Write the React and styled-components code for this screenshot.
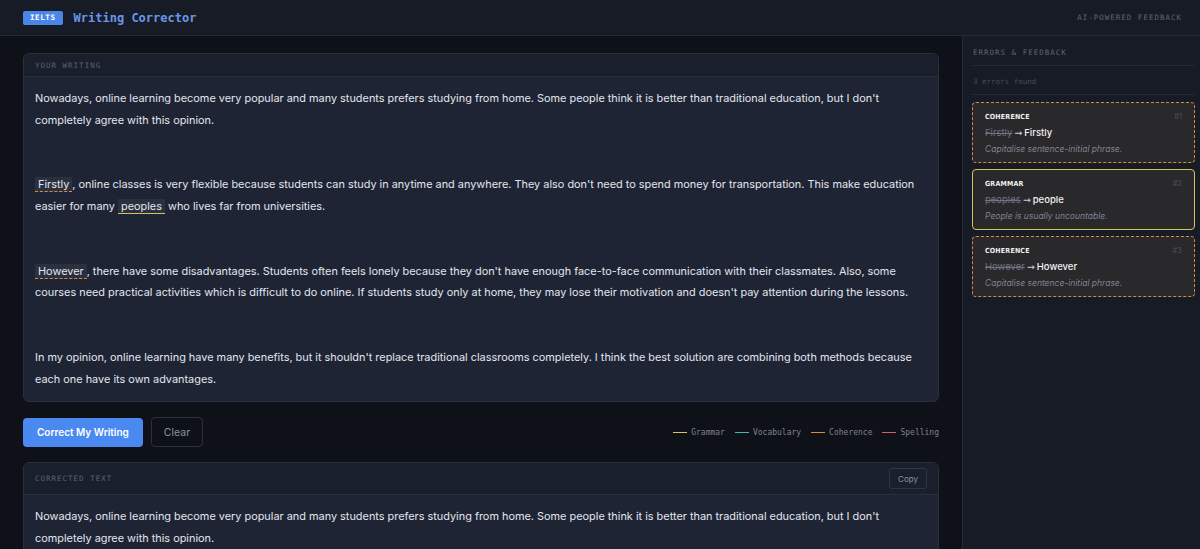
import React from 'react';
import styled, { createGlobalStyle } from 'styled-components';

const GlobalStyle = createGlobalStyle`
  html, body { margin: 0; padding: 0; background: #0e1117; }
  body { font-family: Inter, "Noto Sans", sans-serif; color: #e2e6ee; overflow: hidden; }
  * { box-sizing: border-box; }
`;

const mono = `"DejaVu Sans Mono", "Liberation Mono", monospace`;

const colors = {
  grammar: '#d8c25a',
  vocabulary: '#3fb8b0',
  coherence: '#d98a3d',
  spelling: '#e0566a',
};

const Page = styled.div`
  width: 1200px;
  height: 549px;
  display: flex;
  flex-direction: column;
  overflow: hidden;
`;

const Header = styled.header`
  height: 36px;
  flex-shrink: 0;
  background: #161b26;
  border-bottom: 1px solid #232a38;
  display: flex;
  align-items: center;
  padding: 0 18px 0 23px;
  gap: 11px;
`;

const Badge = styled.span`
  background: #4a86e8;
  color: #fff;
  font-family: ${mono};
  font-size: 7.5px;
  font-weight: bold;
  letter-spacing: 0.6px;
  padding: 2px 7px;
  border-radius: 2px;
  line-height: 10px;
`;

const Title = styled.h1`
  margin: 0;
  font-family: ${mono};
  font-size: 12px;
  font-weight: bold;
  color: #6b96e6;
  flex: 1;
`;

const Tagline = styled.span`
  font-family: ${mono};
  font-size: 7.5px;
  letter-spacing: 1px;
  color: #5e6676;
`;

const Body = styled.div`
  flex: 1;
  display: flex;
  min-height: 0;
`;

const Main = styled.main`
  flex: 1;
  padding: 17px 23px 0 23px;
  display: flex;
  flex-direction: column;
  gap: 15px;
  overflow: hidden;
`;

const Card = styled.section`
  background: #1e2433;
  border: 1px solid #283040;
  border-radius: 6px;
  flex-shrink: 0;
  overflow: hidden;
`;

const CardHead = styled.div`
  height: ${p => p.$tall ? 32 : 23}px;
  background: #1a1f2c;
  border-bottom: 1px solid #283040;
  display: flex;
  align-items: center;
  justify-content: space-between;
  padding: 0 11px;
`;

const CardLabel = styled.span`
  font-family: ${mono};
  font-size: 7.5px;
  letter-spacing: 1px;
  color: #5a6272;
`;

const Text = styled.div`
  padding: 11px 11px 11px 11px;
  font-size: 10.9px;
  line-height: 21.6px;
  color: #e2e6ee;
`;

const Para = styled.p`
  margin: 0 0 43.2px;
  &:last-child { margin-bottom: 0; }
`;

const Mark = styled.span`
  background: rgba(255, 255, 255, 0.06);
  padding: 0 3px;
  border-bottom: 1.5px ${p => p.$dashed ? 'dashed' : 'solid'} ${p => p.$color};
`;

const Actions = styled.div`
  display: flex;
  align-items: center;
  gap: 8px;
`;

const PrimaryButton = styled.button`
  height: 29px;
  padding: 0 14px;
  background: #4a8af0;
  color: #fff;
  border: 0;
  border-radius: 4px;
  font-family: Inter, sans-serif;
  font-size: 10px;
  font-weight: 600;
`;

const GhostButton = styled.button`
  height: 30px;
  padding: 0 12px;
  background: transparent;
  color: #8a92a2;
  border: 1px solid #2a3140;
  border-radius: 4px;
  font-family: Inter, sans-serif;
  font-size: 10.5px;
`;

const Legend = styled.div`
  margin-left: auto;
  display: flex;
  gap: 10px;
`;

const LegendItem = styled.span`
  display: flex;
  align-items: center;
  gap: 4px;
  font-family: ${mono};
  font-size: 8px;
  color: #7c8494;
  &::before {
    content: '';
    width: 14px;
    height: 1.5px;
    background: ${p => p.$color};
  }
`;

const CopyButton = styled.button`
  height: 21px;
  padding: 0 8px;
  background: transparent;
  border: 1px solid #2e3646;
  border-radius: 3px;
  color: #8a92a2;
  font-family: Inter, sans-serif;
  font-size: 8px;
`;

const Sidebar = styled.aside`
  width: 238px;
  flex-shrink: 0;
  background: #161b26;
  border-left: 1px solid #232a38;
  padding: 10px 5px 0 9px;
  display: flex;
  flex-direction: column;
`;

const SideTitle = styled.div`
  font-family: ${mono};
  font-size: 7.5px;
  letter-spacing: 1px;
  color: #5e6676;
  padding: 2px 0 8px 1px;
  border-bottom: 1px solid #232a38;
`;

const Count = styled.div`
  font-family: ${mono};
  font-size: 7.5px;
  color: #444c5c;
  padding: 11px 0 8px 1px;
  border-bottom: 1px solid #232a38;
  margin-bottom: 7px;
`;

const ErrorList = styled.div`
  display: flex;
  flex-direction: column;
  gap: 6px;
`;

const ErrorCard = styled.div`
  height: 61px;
  background: #29282a;
  border: 1.5px ${p => p.$dashed ? 'dashed' : 'solid'} ${p => p.$color};
  border-radius: 4px;
  padding: 9px 12px 0 12px;
`;

const ErrorTop = styled.div`
  display: flex;
  justify-content: space-between;
  align-items: center;
  line-height: 10px;
`;

const ErrorType = styled.span`
  font-family: "Liberation Sans Narrow", "DejaVu Sans Condensed", Inter, sans-serif;
  font-size: 7px;
  font-weight: bold;
  color: #f1f1f1;
  letter-spacing: 0.2px;
`;

const ErrorNum = styled.span`
  font-size: 7.5px;
  color: #4d5260;
`;

const Change = styled.div`
  margin-top: 4px;
  font-size: 9.5px;
  line-height: 13px;
  color: #f2f2f2;
  font-weight: 500;
`;

const Old = styled.s`
  color: #6e7484;
  font-weight: 400;
`;

const Arrow = styled.span`
  font-family: "DejaVu Sans", sans-serif;
  font-weight: 400;
  color: #c8ccd4;
  margin: 0 2px;
`;

const Note = styled.div`
  margin-top: 5px;
  font-size: 8.5px;
  line-height: 11px;
  font-style: italic;
  color: #7e8494;
`;

const errors = [
  { type: 'COHERENCE', from: 'Firstly', to: 'Firstly', note: 'Capitalise sentence-initial phrase.', color: colors.coherence, dashed: true },
  { type: 'GRAMMAR', from: 'peoples', to: 'people', note: 'People is usually uncountable.', color: colors.grammar, dashed: false },
  { type: 'COHERENCE', from: 'However', to: 'However', note: 'Capitalise sentence-initial phrase.', color: colors.coherence, dashed: true },
];

export default function App() {
  return (
    <Page>
      <GlobalStyle />
      <Header>
        <Badge>IELTS</Badge>
        <Title>Writing Corrector</Title>
        <Tagline>AI-POWERED FEEDBACK</Tagline>
      </Header>
      <Body>
        <Main>
          <Card>
            <CardHead><CardLabel>YOUR WRITING</CardLabel></CardHead>
            <Text>
              <Para>Nowadays, online learning become very popular and many students prefers studying from home. Some people think it is better than traditional education, but I don't completely agree with this opinion.</Para>
              <Para><Mark $dashed $color={colors.coherence}>Firstly</Mark>, online classes is very flexible because students can study in anytime and anywhere. They also don't need to spend money for transportation. This make education easier for many <Mark $color={colors.grammar}>peoples</Mark> who lives far from universities.</Para>
              <Para><Mark $dashed $color={colors.coherence}>However</Mark>, there have some disadvantages. Students often feels lonely because they don't have enough face-to-face communication with their classmates. Also, some courses need practical activities which is difficult to do online. If students study only at home, they may lose their motivation and doesn't pay attention during the lessons.</Para>
              <Para>In my opinion, online learning have many benefits, but it shouldn't replace traditional classrooms completely. I think the best solution are combining both methods because each one have its own advantages.</Para>
            </Text>
          </Card>
          <Actions>
            <PrimaryButton>Correct My Writing</PrimaryButton>
            <GhostButton>Clear</GhostButton>
            <Legend>
              <LegendItem $color={colors.grammar}>Grammar</LegendItem>
              <LegendItem $color={colors.vocabulary}>Vocabulary</LegendItem>
              <LegendItem $color={colors.coherence}>Coherence</LegendItem>
              <LegendItem $color={colors.spelling}>Spelling</LegendItem>
            </Legend>
          </Actions>
          <Card>
            <CardHead $tall>
              <CardLabel>CORRECTED TEXT</CardLabel>
              <CopyButton>Copy</CopyButton>
            </CardHead>
            <Text>
              <Para>Nowadays, online learning become very popular and many students prefers studying from home. Some people think it is better than traditional education, but I don't completely agree with this opinion.</Para>
            </Text>
          </Card>
        </Main>
        <Sidebar>
          <SideTitle>ERRORS &amp; FEEDBACK</SideTitle>
          <Count>3 errors found</Count>
          <ErrorList>
            {errors.map((e, i) => (
              <ErrorCard key={i} $color={e.color} $dashed={e.dashed}>
                <ErrorTop>
                  <ErrorType>{e.type}</ErrorType>
                  <ErrorNum>#{i + 1}</ErrorNum>
                </ErrorTop>
                <Change><Old>{e.from}</Old><Arrow>→</Arrow>{e.to}</Change>
                <Note>{e.note}</Note>
              </ErrorCard>
            ))}
          </ErrorList>
        </Sidebar>
      </Body>
    </Page>
  );
}
